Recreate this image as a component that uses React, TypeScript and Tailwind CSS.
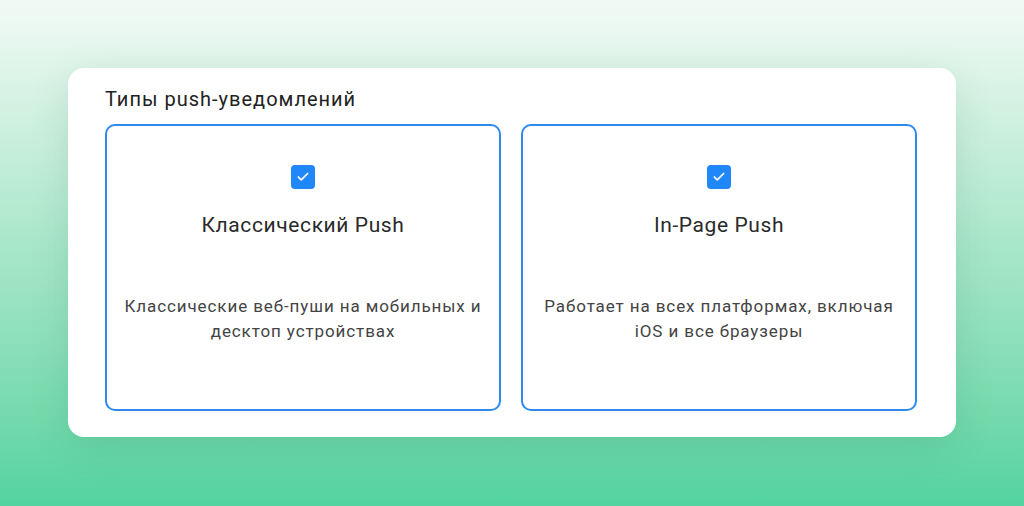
import { Check } from 'lucide-react';

interface PushType {
  title: string;
  description: string;
}

const types: PushType[] = [
  {
    title: 'Классический Push',
    description: 'Классические веб-пуши на мобильных и десктоп устройствах',
  },
  {
    title: 'In-Page Push',
    description: 'Работает на всех платформах, включая iOS и все браузеры',
  },
];

function TypeCard({ t }: { t: PushType }) {
  return (
    <div className="flex h-[287px] flex-col items-center rounded-[10px] border-2 border-[#2f89ee] bg-white px-3 pt-[39px]">
      <div className="flex h-6 w-6 items-center justify-center rounded-[4px] bg-[#1f87f7]">
        <Check className="h-3.5 w-3.5 text-white" strokeWidth={3} />
      </div>
      <div className="mt-[22px] text-[21px] leading-7 tracking-[0.6px] text-[#2a2a2a]">{t.title}</div>
      <p className="mt-[55px] text-center text-[17px] leading-[25px] tracking-[0.9px] text-[#444]">{t.description}</p>
    </div>
  );
}

export default function App() {
  return (
    <div
      className="flex h-[506px] w-full items-start justify-center bg-gradient-to-b from-[#f2faf6] via-[#a6e6c8] to-[#52d39e] pt-[68px]"
      style={{ fontFamily: 'Roboto, "Noto Sans", sans-serif' }}
    >
      <div className="w-[888px] rounded-2xl bg-white pl-[37px] pr-[39px] pt-[20px] pb-[26px] shadow-[0_10px_40px_rgba(20,80,50,0.12)]">
        <h2 className="mb-[13px] text-[20px] leading-[23px] tracking-[1px] text-[#222]">Типы push-уведомлений</h2>
        <div className="grid grid-cols-2 gap-5">
          {types.map((t) => (
            <TypeCard key={t.title} t={t} />
          ))}
        </div>
      </div>
    </div>
  );
}
